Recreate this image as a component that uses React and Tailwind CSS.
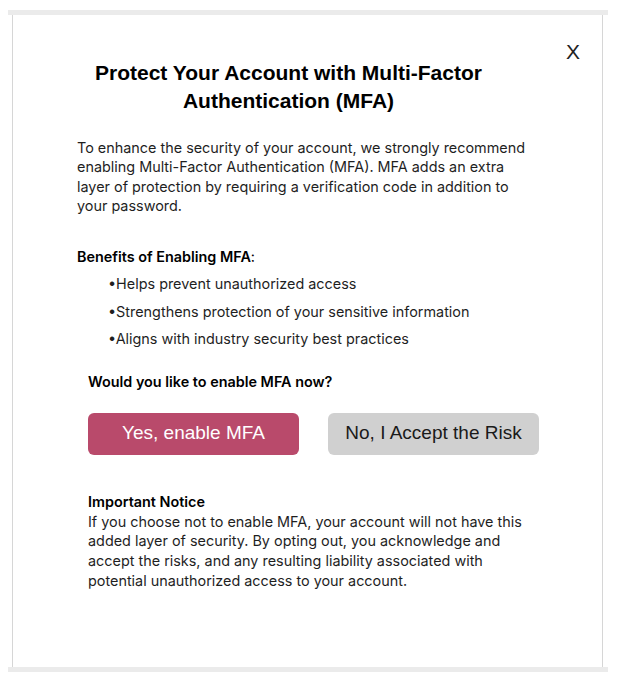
import React from 'react';

const benefits = [
  'Helps prevent unauthorized access',
  'Strengthens protection of your sensitive information',
  'Aligns with industry security best practices',
];

export default function App() {
  return (
    <div className="w-[619px] h-[679px] bg-white pt-[10px] pl-[8px] font-['Inter',sans-serif] text-[#1f1f1f]">
      <div className="w-[600px] h-[662px] border-y-[5px] border-[#ebebeb]">
        <div className="relative ml-[4px] w-[591px] h-full border-x border-[#d6d6d6] pl-[64px] pt-[44px]">
          <button className="absolute right-[22px] top-[21px] text-[21px] font-['Liberation_Sans',sans-serif] text-[#222]">
            X
          </button>

          <h1 className="w-[423px] text-center text-[21px] leading-[28px] font-bold font-['Liberation_Sans',sans-serif] text-black">
            Protect Your Account with Multi-Factor Authentication (MFA)
          </h1>

          <p className="mt-[23px] w-[452px] text-[14.4px] leading-[19.3px]">
            To enhance the security of your account, we strongly recommend enabling Multi-Factor
            Authentication (MFA). MFA adds an extra layer of protection by requiring a verification
            code in addition to your password.
          </p>

          <p className="mt-[32px] text-[14.4px] leading-[19px] font-semibold text-black">
            Benefits of Enabling MFA<span className="font-normal">:</span>
          </p>
          <ul className="mt-[4px] pl-[31px] text-[14.4px] leading-[27.5px]">
            {benefits.map((b) => (
              <li key={b}>•{b}</li>
            ))}
          </ul>

          <div className="pl-[11px]">
            <p className="mt-[19px] text-[14.4px] leading-[19px] font-semibold text-black">
              Would you like to enable MFA now?
            </p>

            <div className="mt-[22px] flex gap-[29px]">
              <button className="w-[211px] h-[42px] rounded-[6px] bg-[#b94a6b] text-white text-[19px] font-['Liberation_Sans',sans-serif]">
                Yes, enable MFA
              </button>
              <button className="w-[211px] h-[42px] rounded-[6px] bg-[#d0d0d0] text-[#1a1a1a] text-[19px] font-['Liberation_Sans',sans-serif]">
                No, I Accept the Risk
              </button>
            </div>

            <p className="mt-[37px] text-[14.4px] leading-[20px] font-semibold text-black">
              Important Notice
            </p>
            <p className="w-[440px] text-[14.4px] leading-[19.7px]">
              If you choose not to enable MFA, your account will not have this added layer of
              security. By opting out, you acknowledge and accept the risks, and any resulting
              liability associated with potential unauthorized access to your account.
            </p>
          </div>
        </div>
      </div>
    </div>
  );
}
